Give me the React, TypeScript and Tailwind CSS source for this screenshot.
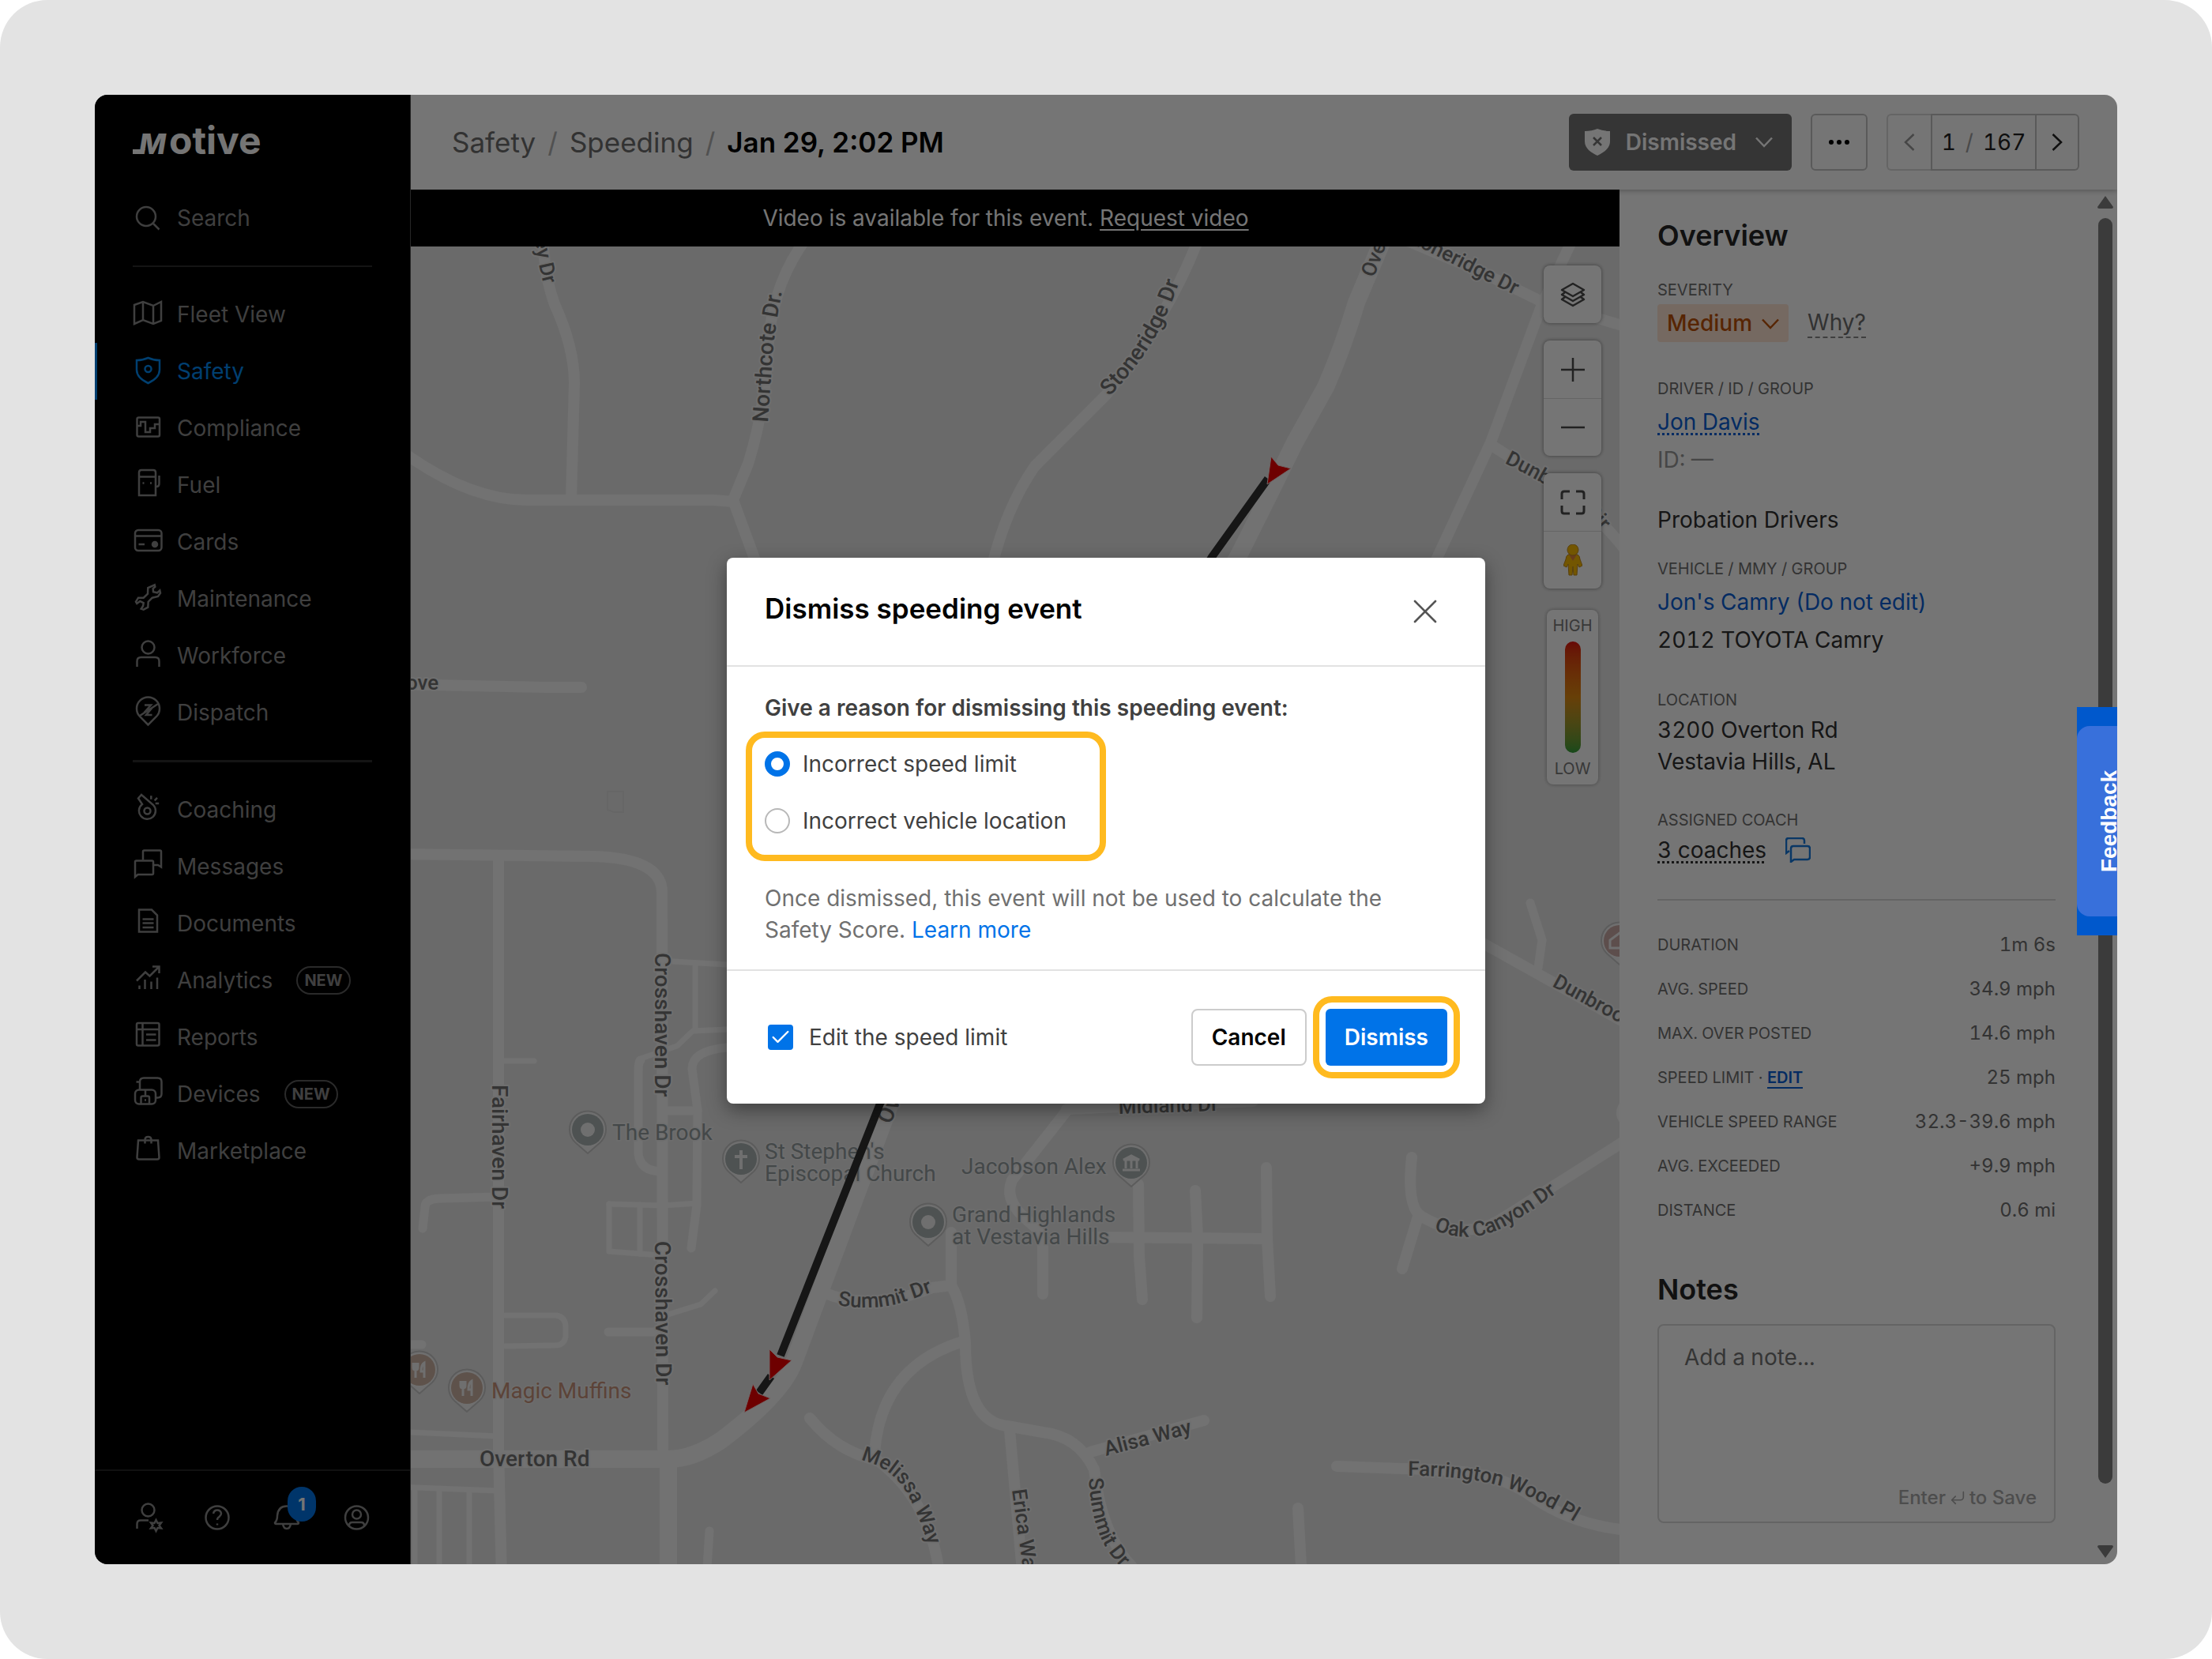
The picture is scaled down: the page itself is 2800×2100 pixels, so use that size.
import type { ReactNode } from 'react';
import { Check, CornerDownLeft, X } from 'lucide-react';

type NavItem = {
  label: string;
  icon: ReactNode;
  active?: boolean;
  isNew?: boolean;
};

const primaryNav: NavItem[] = [
  {
    label: 'Fleet View',
    icon: <path d="M2 7 13 3l13 5 10-5v24l-10 4-13-5-11 5ZM13 3v23M26 8v23" />,
  },
  {
    label: 'Safety',
    active: true,
    icon: (
      <>
        <path d="M5 5q8 0 14.500-3Q26 5 34 5v12c0 8-7 13.500-14.500 17C12 30.500 5 25 5 17Z" />
        <circle cx="19.500" cy="16" r="4" />
      </>
    ),
  },
  {
    label: 'Compliance',
    icon: (
      <>
        <rect x="5.500" y="5.500" width="28.500" height="24" rx="2" />
        <path d="M5.500 16H10v-5h6v13h6v-5h6v-5h6" />
      </>
    ),
  },
  {
    label: 'Fuel',
    icon: (
      <>
        <path d="M8 32V3q0-3 3-3h15q3 0 3 3v29ZM8 8.500h21M29 21h1q3.500 0 3.500-4V7" />
        <path d="M12.500 16.500h2M22 16.500h2" />
      </>
    ),
  },
  {
    label: 'Cards',
    icon: (
      <>
        <rect x="3" y="4" width="33.500" height="26" rx="4" />
        <path d="M3 11.500h33.500M7.500 22H15" />
        <circle cx="28" cy="22" r="3" fill="currentColor" />
      </>
    ),
  },
  {
    label: 'Maintenance',
    icon: (
      <path d="M27.700 1.300 19.300 5 19 12.700l-5.300 5H7l-3 5L5.300 25l4-3 4.400 2.300-.7 4-2.300 3.400 3 1 5.600-3 .4-7 5-5 7.300-1.700 3-4.300-.7-3.400-3.300 3-5-1-.3-4.300 2.600-2.300Z" />
    ),
  },
  {
    label: 'Workforce',
    icon: (
      <>
        <circle cx="19.500" cy="8.500" r="8" />
        <path d="M5.500 33v-7q0-5 5-5h18q5 0 5 5v7" />
      </>
    ),
  },
  {
    label: 'Dispatch',
    icon: (
      <>
        <path d="M19.500 34.500 9 24a14.500 14.500 0 1 1 21 0Z" />
        <path d="M9 23 32 8M15 9.500h8L14.500 19M24.500 22H17l7.500-9" />
      </>
    ),
  },
];

const secondaryNav: NavItem[] = [
  {
    label: 'Coaching',
    icon: (
      <>
        <circle cx="18.500" cy="20.500" r="4" />
        <path d="m12 12-5-7.500L11 0l15 13a10.500 10.500 0 1 1-14-1ZM23.300 1.300v4.500M27.700 7.300l3.300-3.500M28.700 11h4.500" />
      </>
    ),
  },
  {
    label: 'Messages',
    icon: (
      <>
        <path d="M13 10.500V0q0-1.500 1.500-1.500h20q1.500 0 1.500 1.500v19.500L32 17h-5" />
        <path d="M3 32V13q0-1.500 1.500-1.500h20q1.500 0 1.500 1.500v14.500q0 1.500-1.500 1.500H6.500Z" />
      </>
    ),
  },
  {
    label: 'Documents',
    icon: <path d="M8 1.500h16l7 7v21H8ZM12.500 13.500h14M12.500 18.500h14M12.500 24h14" />,
  },
  {
    label: 'Analytics',
    isNew: true,
    icon: (
      <path d="M5 19.500 16 8.500l5.500 5L33 2M25 1.500h8.500V10M8.500 25.500v4.500M15.500 18v12M23.500 20.500V30M31 15.500V30" />
    ),
  },
  {
    label: 'Reports',
    icon: (
      <>
        <rect x="5" y="1" width="28.500" height="28.500" rx="2" />
        <path d="M5 9h28.500M12.500 1v28.500M17 15.500h12.500M17 22.500h12.500" />
      </>
    ),
  },
  {
    label: 'Devices',
    isNew: true,
    icon: (
      <>
        <path d="M9 13V3.500q0-5 5-5h17.500q5 0 5 5v15q0 5-5 5h-2M4.500 3.500H9" />
        <rect x="3" y="13.500" width="26" height="18" rx="5" />
        <path d="M16 13.500v8M10.500 31.500v-8q0-2 2-2H19q2 0 2 2v8M15 26.500h2" />
      </>
    ),
  },
  {
    label: 'Marketplace',
    icon: (
      <path d="M7 5.500h25l1.500 21.500q0 2.500-2.500 2.500H8q-2.500 0-2.500-2.500ZM15.500 9.500V5q0-4 4-4t4 4v4.500" />
    ),
  },
];

const stats = [
  { label: 'DURATION', value: '1m 6s' },
  { label: 'AVG. SPEED', value: '34.9 mph' },
  { label: 'MAX. OVER POSTED', value: '14.6 mph' },
  { label: 'SPEED LIMIT', value: '25 mph', editable: true },
  { label: 'VEHICLE SPEED RANGE', value: '32.3-39.6 mph' },
  { label: 'AVG. EXCEEDED', value: '+9.9 mph' },
  { label: 'DISTANCE', value: '0.6 mi' },
];

// Road centre lines grouped by drawn width
const roads: { w: number; d: string[] }[] = [
  {
    w: 22,
    d: [
      'M1752 300 1717 383 Q1700 440 1678 490 L1639 560 Q1600 640 1567 705 L1127 1397 1040 1630 1005 1724 Q990 1765 913 1823 Q877 1847 846 1847 L500 1847',
      'M846 1847 V2000',
    ],
  },
  {
    w: 14,
    d: [
      'M687 300 Q689 350 702 385 Q727 440 727 485 L723 633',
      'M500 565 Q590 633 667 633 H903 L928 635',
      'M1022 300 Q976 360 972 444 Q968 520 947 587 L928 633 958 715',
      'M1518 300 Q1480 400 1400 500 L1310 590 Q1275 640 1256 715',
      'M1770 300 1872 343 1952 382 2060 414',
      'M1992 300 1952 385 1887 560 1815 715',
      'M1887 563 1950 603 Q2020 645 2060 700',
      'M500 866 690 870 H736',
      'M500 1081 750 1084 Q838 1086 838 1130 L839 1834',
      'M631 1084 V1834 L635 2000',
      'M1040 1635 Q1100 1662 1180 1630 L1204 1627 Q1218 1650 1222 1700 Q1222 1800 1275 1805 L1320 1813 Q1365 1818 1385 1860 Q1395 1950 1440 1990',
      'M1204 1627 V1560',
      'M1219 1698 Q1115 1730 1107 1839',
      'M1025 1795 Q1060 1838 1110 1848 Q1180 1900 1190 2000',
      'M1278 1810 1295 2000',
      'M1380 1838 1524 1798',
      'M1355 1400 1281 1494 Q1270 1520 1302 1546 Q1320 1560 1320 1575 V1638',
      'M1350 1404 1586 1394',
      'M1441 1499 1442 1590 1446 1645',
      'M1513 1507 1516 1567 1515 1668',
      'M1603 1478 1604 1568 1608 1641',
      'M1380 1566 1604 1568',
      'M1787 1465 Q1780 1530 1800 1540 Q1850 1570 1896 1546 L2060 1442',
      'M1795 1540 1775 1606',
      'M1692 1856 1830 1861 Q1900 1865 1940 1895 Q1990 1930 2060 1937',
      'M1643 1909 1648 2000',
      'M1870 1190 2060 1296',
      'M2060 1395 q-14 14 0 26',
    ],
  },
  {
    w: 11,
    d: [
      'M811 1342 Q808 1342 808 1360 V1460 Q810 1483 839 1483',
      'M770 1686 H831',
      'M630 1515 556 1517 Q538 1518 538 1528 L535 1555',
      'M846 1406 H883',
      'M898 1938 894 2000',
      'M920 1326 Q876 1330 876 1353 L883 1405 882 1525 875 1580',
      'M1937 1143 1952 1190 1947 1225',
      'M518 1702 H534',
    ],
  },
  {
    w: 7,
    d: [
      'M638 1343 H676',
      'M852 1217 920 1221',
      'M880 1219 V1303',
      'M920 1303 877 1305 857 1324 811 1340',
      'M771 1524 839 1526 883 1523',
      'M771 1524 V1584 L836 1589',
      'M810 1525 V1587',
      'M839 1666 887 1651 905 1634',
      'M640 1665 H704 Q716 1667 716 1680 V1692 Q714 1704 700 1703 L640 1704',
      'M500 1812 630 1818',
      'M500 1882 630 1887',
      'M525 1886 V2000',
      'M556 1886 V2000',
      'M594 1886 V2000',
    ],
  },
];

const streetLabels = [
  { id: 'valley', text: 'ey Dr', d: 'M677 302 Q681 340 697 390' },
  { id: 'northcote', text: 'Northcote Dr.', d: 'M972 535 L978 450 Q981 410 996 340', major: true },
  { id: 'stoneridge-w', text: 'Stoneridge Dr', d: 'M1404 502 Q1450 455 1472 408 T1506 312', major: true },
  { id: 'stoneridge-e', text: 'Stoneridge Dr', d: 'M1775 302 L1990 410' },
  { id: 'overton-n', text: 'Overton', d: 'M1739 352 L1775 256' },
  { id: 'dunbrook-cir', text: 'Dunbrook Cir', d: 'M1904 586 Q1960 614 1990 635 T2070 730' },
  { id: 'cove', text: 'Cove', d: 'M497 873 H620' },
  { id: 'fairhaven', text: 'Fairhaven Dr', d: 'M623 1373 V1580', major: true },
  { id: 'crosshaven-n', text: 'Crosshaven Dr', d: 'M829 1206 V1450', major: true },
  { id: 'crosshaven-s', text: 'Crosshaven Dr', d: 'M829 1571 L831 1800', major: true },
  { id: 'overton-s', text: 'Overton Rd', d: 'M1127 1424 L1190 1278', major: true },
  { id: 'overton', text: 'Overton Rd', d: 'M607 1856 H800', major: true },
  { id: 'summit-n', text: 'Summit Dr', d: 'M1060 1652 Q1110 1660 1147 1647 L1210 1625' },
  { id: 'melissa', text: 'Melissa Way', d: 'M1089 1848 Q1130 1858 1148 1890 T1186 1990' },
  { id: 'erica', text: 'Erica Way', d: 'M1281 1886 L1301 2030' },
  { id: 'summit-s', text: 'Summit Dr', d: 'M1378 1871 Q1382 1930 1400 1959 T1450 2010' },
  { id: 'alisa', text: 'Alisa Way', d: 'M1400 1843 L1540 1806' },
  { id: 'farrington', text: 'Farrington Wood Pl', d: 'M1782 1868 Q1880 1868 1930 1892 T2030 1950' },
  { id: 'oak', text: 'Oak Canyon Dr', d: 'M1815 1557 Q1860 1575 1900 1555 T2010 1480' },
  { id: 'dunbrook-dr', text: 'Dunbrook Dr', d: 'M1964 1248 L2100 1322' },
  { id: 'midland', text: 'Midland Dr', d: 'M1416 1410 L1600 1404' },
];

const places = [
  { x: 775, y: 1443, lines: ['The Brook'] },
  { x: 968, y: 1467, lines: ["St Stephen's", 'Episcopal Church'] },
  { x: 1205, y: 1547, lines: ['Grand Highlands', 'at Vestavia Hills'] },
  { x: 1217, y: 1486, lines: ['Jacobson Alex'] },
];

function Chevron({ className }: { className: string }) {
  return (
    <svg
      viewBox="0 0 22 14"
      className={`w-[22px] ${className}`}
      fill="none"
      stroke="currentColor"
      strokeWidth="2.5"
      aria-hidden
    >
      <path d="m1 1.500 10 10.500 10-10.500" />
    </svg>
  );
}

function Pin({ x, y, fill, children }: { x: number; y: number; fill: string; children: ReactNode }) {
  return (
    <g transform={`translate(${x} ${y})`}>
      <path d="M0 29 -16 15A23 23 0 1 1 16 15Z" fill="#f2f2f2" stroke="#c8c8c8" strokeWidth="2" />
      <circle cy="-1" r="20" fill={fill} />
      {children}
    </g>
  );
}

function Cutlery() {
  return (
    <path
      d="M-8-10v6q0 3 3 3t3-3v-6M-5-10V9M6 9v-19q-4 2-4 11h4"
      fill="none"
      stroke="#f2f2f2"
      strokeWidth="3"
    />
  );
}

function StreetMap() {
  return (
    <svg
      viewBox="520 312 1530 1668"
      preserveAspectRatio="xMidYMid slice"
      className="absolute inset-0 h-full w-full bg-[#e8e8e8] font-[Roboto,sans-serif]"
      role="img"
      aria-label="Map of the event route"
    >
      {roads.map((group) => (
        <g
          key={group.w}
          fill="none"
          stroke="#f8f8f8"
          strokeWidth={group.w}
          strokeLinecap="round"
          strokeLinejoin="round"
        >
          {group.d.map((d) => (
            <path key={d} d={d} />
          ))}
        </g>
      ))}
      <path d="M769 1002h20v26h-12l-8-3Z" fill="none" stroke="#dedede" strokeWidth="2" />

      {/* Street names follow their roads */}
      <g
        fill="#727272"
        stroke="#f2f2f2"
        strokeWidth="4"
        strokeLinejoin="round"
        className="font-medium [paint-order:stroke]"
      >
        {streetLabels.map((s) => (
          <g key={s.id}>
            <path id={s.id} d={s.d} fill="none" stroke="none" />
            <text className={s.major ? 'text-[28px]' : 'text-[26px]'}>
              <textPath href={`#${s.id}`}>{s.text}</textPath>
            </text>
          </g>
        ))}
      </g>

      {/* Points of interest */}
      <g className="text-[28px] [paint-order:stroke]" strokeWidth="3" stroke="#eeeeee" fill="#949d9f">
        {places.map((p) => (
          <text key={p.x} x={p.x} y={p.y}>
            {p.lines.map((line, i) => (
              <tspan key={line} x={p.x} dy={i * 28}>
                {line}
              </tspan>
            ))}
          </text>
        ))}
        <text x="622" y="1770" fill="#c8937a">
          Magic Muffins
        </text>
      </g>
      <Pin x={744} y={1431} fill="#aab3b3">
        <circle cy="-1" r="9" fill="#f2f2f2" />
      </Pin>
      <Pin x={938} y={1468} fill="#aab3b3">
        <path d="M0-12V12M-8-4H8" stroke="#f2f2f2" strokeWidth="4" />
      </Pin>
      <Pin x={1175} y={1548} fill="#aab3b3">
        <circle cy="-1" r="9" fill="#f2f2f2" />
      </Pin>
      <Pin x={1432} y={1473} fill="#aab3b3">
        <path
          d="M-10-5 0-10 10-5ZM-11 8h22M-7-4V6M0-4V6M7-4V6"
          fill="#f2f2f2"
          stroke="#f2f2f2"
          strokeWidth="3"
        />
      </Pin>
      <Pin x={531} y={1735} fill="#cdb3a3">
        <Cutlery />
      </Pin>
      <Pin x={591} y={1758} fill="#cdb3a3">
        <Cutlery />
      </Pin>
      <Pin x={2050} y={1192} fill="#cbaaa6">
        <path d="M-12 8V-2L0-11 12-2V8Z" fill="none" stroke="#f2f2f2" strokeWidth="3" />
      </Pin>

      {/* Driven route */}
      <g fill="none" stroke="#303030" strokeWidth="10">
        <path d="M1605 606 1534 705 1114 1397 988 1716M976 1742 961 1763" />
      </g>
      <g fill="#ef0000" stroke="#f4dada" strokeWidth="1">
        <path d="m1609 578 9 11 16 4-30 20Z" />
        <path d="m974 1708 10 10 18 4-28 25Z" />
        <path d="m953 1752 7 12 15 6-33 18Z" />
      </g>
    </svg>
  );
}

function NavLink({ item }: { item: NavItem }) {
  return (
    <a
      href="#"
      aria-current={item.active ? 'page' : undefined}
      className={`flex h-[72px] items-center gap-[18px] border-l-3 pl-[45px] text-[28px] leading-10 ${
        item.active ? 'border-[#0089f3] text-[#0089f3]' : 'border-transparent text-[#8a8a8a]'
      }`}
    >
      <svg
        viewBox="0 0 38 38"
        className="size-[38px] shrink-0 overflow-visible"
        fill="none"
        stroke="currentColor"
        strokeWidth="2.5"
        aria-hidden
      >
        {item.icon}
      </svg>
      {item.label}
      {item.isNew && (
        <span className="ml-3 rounded-full border-2 border-[#5c5c5c] px-2 text-xl leading-8 font-bold">
          NEW
        </span>
      )}
    </a>
  );
}

function FooterIcon({ label, children }: { label: string; children: ReactNode }) {
  return (
    <button type="button" aria-label={label} className="relative size-[38px]">
      <svg
        viewBox="0 0 38 38"
        className="size-[38px] overflow-visible"
        fill="none"
        stroke="currentColor"
        strokeWidth="2.5"
      >
        {children}
      </svg>
    </button>
  );
}

function Sidebar() {
  return (
    <aside className="flex w-[400px] shrink-0 flex-col border-r border-[#555555] bg-black">
      <div className="flex h-[120px] items-center pl-12">
        <svg
          viewBox="0 0 180 60"
          className="h-[60px] w-[180px] font-[Inter,sans-serif]"
          fill="#ffffff"
          role="img"
          aria-label="Motive"
        >
          <path d="M0 39h16l-4 6H0Z" />
          <text x="8" y="45" className="text-4xl font-extrabold italic">
            M
          </text>
          <text x="46" y="45" className="text-[48px] font-bold">
            otive
          </text>
        </svg>
      </div>
      <a
        href="#"
        className="flex h-[72px] items-center gap-[18px] pl-12 text-[28px] leading-10 text-[#8a8a8a]"
      >
        <svg viewBox="0 0 38 38" className="size-[38px]" fill="none" stroke="currentColor" strokeWidth="2.500">
          <circle cx="17" cy="17" r="12" />
          <path d="m26 26 7.500 7.500" />
        </svg>
        Search
      </a>
      <hr className="mx-12 my-6 border-t-2 border-[#2c2c2c]" />
      <nav aria-label="Primary">
        {primaryNav.map((item) => (
          <NavLink key={item.label} item={item} />
        ))}
        <hr className="mx-12 my-6 border-t-3 border-[#2c2c2c]" />
        {secondaryNav.map((item) => (
          <NavLink key={item.label} item={item} />
        ))}
      </nav>

      <div className="mt-auto flex h-[120px] items-center gap-[50px] border-t-2 border-[#252525] pl-12 text-[#8a8a8a]">
        <FooterIcon label="Admin">
          <circle cx="19.500" cy="9.500" r="8" />
          <path d="M5.500 33v-6q0-4.500 4.500-4.500h10" />
          <path d="m29.500 22 2 4 4.500-.5-2.500 3.500 2.500 3.500-4.500-.5-2 4-2-4-4.500.5 2.500-3.500-2.500-3.500 4.500.5Z" />
        </FooterIcon>
        <FooterIcon label="Help">
          <circle cx="19" cy="19" r="14.500" />
          <path d="M14 14q1-4.500 5-4.500t5 4q0 2.500-2.500 4.500-2.500 1.500-2.500 4M19 26.500v2" />
        </FooterIcon>
        <div className="relative size-[38px]">
          <FooterIcon label="Notifications">
            <path d="M4 25.500q3-3 3-9Q8 4.500 19 4.500t12 12q0 6 3 9 0 1.500-1.500 1.500h-27Q4 27 4 25.500ZM14 27q1 6 5 6t5-6" />
          </FooterIcon>
          <span className="absolute -top-5 left-5 w-9 rounded-full bg-[#0073e6] text-center text-[22px] leading-11 font-bold text-white">
            1
          </span>
        </div>
        <FooterIcon label="Account">
          <circle cx="19.500" cy="19" r="14.500" />
          <circle cx="19.500" cy="15" r="5.500" />
          <path d="M10 29q0-4 4-4h11q4 0 4 4" />
        </FooterIcon>
      </div>
    </aside>
  );
}

function Header() {
  return (
    <header className="relative z-10 flex h-[120px] items-center bg-white pr-12 pl-[52px] shadow-[0_2px_6px_rgba(0,0,0,0.25)]">
      <nav aria-label="Breadcrumb" className="flex gap-[15px] text-[35px] leading-11 text-[#6d6d6d]">
        <a href="#">Safety</a>
        <span className="text-[#b0b0b0]">/</span>
        <a href="#">Speeding</a>
        <span className="text-[#b0b0b0]">/</span>
        <h1 className="font-semibold text-black">Jan 29, 2:02 PM</h1>
      </nav>
      <div className="ml-auto flex items-center gap-6">
        <button
          type="button"
          className="flex h-[72px] items-center gap-5 rounded-md bg-[#737373] pr-6 pl-5 text-[28px] font-semibold text-white"
        >
          <svg viewBox="0 0 32 34" className="h-[34px] w-8" aria-hidden>
            <path d="M0 3q9 0 16-3 7 3 16 3v13c0 9-8 14-16 18C8 30 0 25 0 16Z" fill="#ffffff" />
            <path d="m11 11 10 10M21 11 11 21" stroke="#737373" strokeWidth="2.500" />
          </svg>
          Dismissed
          <Chevron className="ml-1" />
        </button>
        <button
          type="button"
          aria-label="More actions"
          className="flex size-[72px] items-center justify-center gap-1 rounded-md border-2 border-[#c4c4c4]"
        >
          <span className="size-[6px] rounded-full bg-black" />
          <span className="size-[6px] rounded-full bg-black" />
          <span className="size-[6px] rounded-full bg-black" />
        </button>
        <div className="flex h-[72px] items-stretch text-[28px] text-[#222222] tabular-nums">
          <button
            type="button"
            aria-label="Previous event"
            className="flex w-14 items-center justify-center rounded-l-md border-2 border-r-0 border-[#dcdcdc] text-[#9a9a9a]"
          >
            <Chevron className="rotate-90" />
          </button>
          <span className="flex w-[134px] items-center justify-center gap-3 border-2 border-[#c4c4c4]">
            1 <span className="text-[#a0a0a0]">/</span> 167
          </span>
          <button
            type="button"
            aria-label="Next event"
            className="flex w-[54px] items-center justify-center rounded-r-md border-2 border-l-0 border-[#c4c4c4]"
          >
            <Chevron className="-rotate-90" />
          </button>
        </div>
      </div>
    </header>
  );
}

function MapControls() {
  const card = 'flex flex-col rounded-lg bg-white shadow-[0_0_5px_rgba(0,0,0,0.45)]';
  const button = 'flex h-[73px] items-center justify-center text-[#4a4a4a]';

  return (
    <div className="absolute top-6 right-[23px] flex w-[73px] flex-col gap-[22px]">
      <div className={card}>
        <button type="button" aria-label="Layers" className={button}>
          <svg viewBox="0 0 32 32" className="size-8" fill="none" stroke="currentColor" strokeWidth="2.500">
            <path d="m16 2 14 8-14 8L2 10Z" strokeLinejoin="round" />
            <path d="m6 13-4 3 14 8 14-8-4-3M6 19l-4 3 14 8 14-8-4-3" strokeLinejoin="round" />
          </svg>
        </button>
      </div>
      <div className={card}>
        <button type="button" aria-label="Zoom in" className={button}>
          <svg viewBox="0 0 32 32" className="size-8" stroke="currentColor" strokeWidth="2.500">
            <path d="M16 1v30M1 16h30" />
          </svg>
        </button>
        <button type="button" aria-label="Zoom out" className={`${button} border-t border-[#dcdcdc]`}>
          <svg viewBox="0 0 32 32" className="size-8" stroke="currentColor" strokeWidth="2.500">
            <path d="M1 16h30" />
          </svg>
        </button>
      </div>
      <div className={card}>
        <button type="button" aria-label="Full screen" className={button}>
          <svg viewBox="0 0 32 32" className="size-8" fill="none" stroke="currentColor" strokeWidth="3">
            <path d="M2 12V5q0-3 3-3h7M20 2h7q3 0 3 3v7M30 20v7q0 3-3 3h-7M12 30H5q-3 0-3-3v-7" />
          </svg>
        </button>
        <button type="button" aria-label="Street view" className={`${button} border-t border-[#dcdcdc]`}>
          <svg viewBox="0 0 24 40" className="h-10 w-6" fill="#fbbc04" stroke="#c08a1c" strokeWidth="1">
            <path d="M6 13h12q3 2 3 6l3 8-4 2-2-4-1 14h-4l-1-11-1 11H7L6 25l-2 4-4-2 3-8q0-4 3-6Z" />
            <path d="m7 13 5 8 5-8Z" fill="#e2843a" stroke="none" />
            <circle cx="12" cy="7" r="7" />
          </svg>
        </button>
      </div>
      <div className="mx-1 mt-[5px] flex h-[221px] flex-col items-center justify-between rounded-lg bg-white py-2 text-xl leading-6 text-[#7a7a7a] shadow-[0_0_5px_rgba(0,0,0,0.35)]">
        HIGH
        <div className="my-2 w-5 flex-1 rounded-full bg-linear-to-b from-[#e01010] via-[#e08a10] to-[#2fa03a]" />
        LOW
      </div>
    </div>
  );
}

function DetailsPanel() {
  const caption = 'text-xl leading-7 text-[#707070]';
  const body = 'text-[28px] leading-10 text-[#303030]';

  return (
    <aside className="flex w-[630px] shrink-0 bg-white tabular-nums">
      <div className="flex-1 pt-9 pr-7 pl-12">
        <h2 className="text-4xl leading-11 font-semibold text-[#262626]">Overview</h2>

        <p className={`mt-[33px] ${caption}`}>SEVERITY</p>
        <div className="mt-1 flex items-center gap-6">
          <button
            type="button"
            className="flex h-12 items-center gap-3 rounded-sm bg-[#ffe4d3] px-3 text-[28px] font-medium text-[#bd5208]"
          >
            Medium
            <Chevron className="mt-0.5" />
          </button>
          <a href="#" className="border-b-2 border-dashed border-[#8a8a8a] text-[28px] leading-9 text-[#6d6d6d]">
            Why?
          </a>
        </div>

        <p className={`mt-[45px] ${caption}`}>DRIVER / ID / GROUP</p>
        <p className="mt-2 text-[28px] leading-10">
          <a
            href="#"
            className="text-[#0a5fd6] underline decoration-dotted decoration-3 underline-offset-4"
          >
            Jon Davis
          </a>
        </p>
        <p className="mt-2 text-[28px] leading-10 text-[#999999]">ID: —</p>
        <p className={`mt-9 ${body}`}>Probation Drivers</p>

        <p className={`mt-7 ${caption}`}>VEHICLE / MMY / GROUP</p>
        <p className="mt-2 text-[28px] leading-10">
          <a href="#" className="text-[#0a5fd6]">
            Jon&apos;s Camry (Do not edit)
          </a>
        </p>
        <p className={`mt-2 ${body}`}>2012 TOYOTA Camry</p>

        <p className={`mt-[42px] ${caption}`}>LOCATION</p>
        <address className={`mt-1 not-italic ${body}`}>
          3200 Overton Rd
          <br />
          Vestavia Hills, AL
        </address>

        <p className={`mt-10 ${caption}`}>ASSIGNED COACH</p>
        <div className={`mt-1 flex items-center gap-6 ${body}`}>
          <span className="underline decoration-dotted decoration-3 underline-offset-4">3 coaches</span>
          <button type="button" aria-label="Message coaches" className="text-[#1478dc]">
            <svg viewBox="0 0 32 32" className="size-8" fill="none" stroke="currentColor" strokeWidth="2.500">
              <path d="M24 8V4q0-3-3-3H4Q1 1 1 4v16l4-3" />
              <path d="M7 31V14q0-3 3-3h18q3 0 3 3v11q0 3-3 3H11Z" />
            </svg>
          </button>
        </div>

        <hr className="mt-[42px] border-t-2 border-[#dadada]" />

        <table className="mt-7 w-full">
          <tbody>
            {stats.map((row) => (
              <tr key={row.label} className="h-14">
                <th scope="row" className={`text-left font-normal ${caption}`}>
                  {row.label}
                  {row.editable && (
                    <>
                      {' · '}
                      <a href="#" className="border-b-2 border-[#0a5fd6] font-semibold text-[#0a5fd6]">
                        EDIT
                      </a>
                    </>
                  )}
                </th>
                <td className="text-right text-2xl text-[#707070]">{row.value}</td>
              </tr>
            ))}
          </tbody>
        </table>

        <h2 className="mt-[50px] text-4xl leading-11 font-semibold text-[#262626]">Notes</h2>
        <div className="relative mt-[22px]">
          <textarea
            aria-label="Add a note"
            placeholder="Add a note..."
            className="block h-[252px] w-full resize-none rounded-lg border-2 border-[#dadada] px-8 py-5 text-[28px] leading-10 placeholder:text-[#757575]"
          />
          <p className="absolute right-6 bottom-4 flex items-center gap-1 text-2xl font-medium text-[#a8a8a8]">
            Enter <CornerDownLeft size={22} strokeWidth={1.8} /> to Save
          </p>
        </div>
      </div>

      {/* Scroll track */}
      <div className="flex w-[50px] flex-col items-center gap-3 py-2 pl-5" aria-hidden>
        <svg viewBox="0 0 20 16" className="w-5 shrink-0" fill="#828282">
          <path d="M10 0 20 14q0 2-2 2H2q-2 0-2-2Z" />
        </svg>
        <div className="mb-[66px] w-[18px] flex-1 rounded-full bg-[#828282]" />
        <svg viewBox="0 0 20 16" className="w-5 shrink-0" fill="#828282">
          <path d="M10 16 20 2q0-2-2-2H2Q0 0 0 2Z" />
        </svg>
      </div>
    </aside>
  );
}

function DismissDialog() {
  const radio =
    'size-8 appearance-none rounded-full border-2 border-[#b8b8b8] bg-white checked:border-8 checked:border-[#0073e8]';

  return (
    <form
      role="dialog"
      aria-modal="true"
      aria-labelledby="dismiss-title"
      onSubmit={(e) => e.preventDefault()}
      className="w-[960px] rounded-lg bg-white text-[28px] leading-10 shadow-[0_8px_24px_rgba(0,0,0,0.4)]"
    >
      <div className="flex h-[138px] items-center justify-between border-b-2 border-[#e2e2e2] pr-[50px] pb-2 pl-12">
        <h2 id="dismiss-title" className="text-[35px] leading-11 font-semibold text-black">
          Dismiss speeding event
        </h2>
        <button type="button" aria-label="Close" className="pt-2 text-[#555555]">
          <X size={52} strokeWidth={1.2} />
        </button>
      </div>

      <div className="border-b-2 border-[#e2e2e2] px-12 pt-8 pb-[30px]">
        <p id="dismiss-reason" className="font-semibold text-[#404040]">
          Give a reason for dismissing this speeding event:
        </p>
        <div
          role="radiogroup"
          aria-labelledby="dismiss-reason"
          className="mt-[10px] -ml-6 flex w-[456px] flex-col gap-8 rounded-3xl border-8 border-[#ffba1f] px-4 pt-[13px] pb-[23px] text-[#404040]"
        >
          <label className="flex items-center gap-4">
            <input type="radio" name="reason" defaultChecked className={radio} />
            Incorrect speed limit
          </label>
          <label className="flex items-center gap-4">
            <input type="radio" name="reason" className={radio} />
            Incorrect vehicle location
          </label>
        </div>
        <p className="mt-[27px] text-[#707070]">
          Once dismissed, this event will not be used to calculate the Safety Score.{' '}
          <a href="#" className="text-[#0073e8]">
            Learn more
          </a>
        </p>
      </div>

      <div className="flex h-[168px] items-center pr-8 pl-[52px]">
        <label className="flex items-center gap-5 text-[#404040]">
          <span className="grid size-8 *:col-start-1 *:row-start-1">
            <input
              type="checkbox"
              defaultChecked
              className="size-8 appearance-none rounded-sm border-2 border-[#b8b8b8] checked:border-[#0073e8] checked:bg-[#0073e8]"
            />
            <Check size={28} strokeWidth={2} className="pointer-events-none place-self-center text-white" />
          </span>
          Edit the speed limit
        </label>
        <button
          type="button"
          className="ml-auto h-[72px] rounded-lg border-2 border-[#cccccc] px-6 font-semibold text-black"
        >
          Cancel
        </button>
        <div className="ml-2 rounded-3xl border-8 border-[#ffba1f] p-2">
          <button type="submit" className="h-[72px] rounded-md bg-[#0073e8] px-6 font-semibold text-white">
            Dismiss
          </button>
        </div>
      </div>
    </form>
  );
}

export default function App() {
  return (
    <div className="bg-white font-[Inter,sans-serif]">
      <div className="flex min-h-screen rounded-[60px] bg-[#e3e3e3] p-[120px]">
        <div className="relative flex min-w-0 flex-1 overflow-hidden rounded-2xl">
          <Sidebar />
          <div className="flex min-w-0 flex-1 flex-col">
            <Header />
            <div className="flex flex-1">
              <main className="flex min-w-0 flex-1 flex-col">
                <p className="flex h-[72px] items-center justify-center gap-2 bg-black pr-6 text-[28px] text-white">
                  Video is available for this event.
                  <a href="#" className="underline underline-offset-4">
                    Request video
                  </a>
                </p>
                <div className="relative flex-1 overflow-hidden">
                  <StreetMap />
                  <MapControls />
                </div>
              </main>
              <DetailsPanel />
            </div>
          </div>

          <div className="absolute inset-0 z-20 flex items-center justify-center bg-black/54 pt-[3px]">
            <DismissDialog />
          </div>

          <div className="absolute top-[775px] right-0 z-30 h-[289px] w-[51px] overflow-hidden bg-[#0058cc] py-6">
            <button
              type="button"
              className="flex h-full w-[82px] rotate-180 items-center justify-center rounded-r-2xl bg-[#3870db] font-['Liberation_Sans',sans-serif] text-[28px] leading-8 font-bold text-white [writing-mode:vertical-rl]"
            >
              Feedback
            </button>
          </div>
        </div>
      </div>
    </div>
  );
}
